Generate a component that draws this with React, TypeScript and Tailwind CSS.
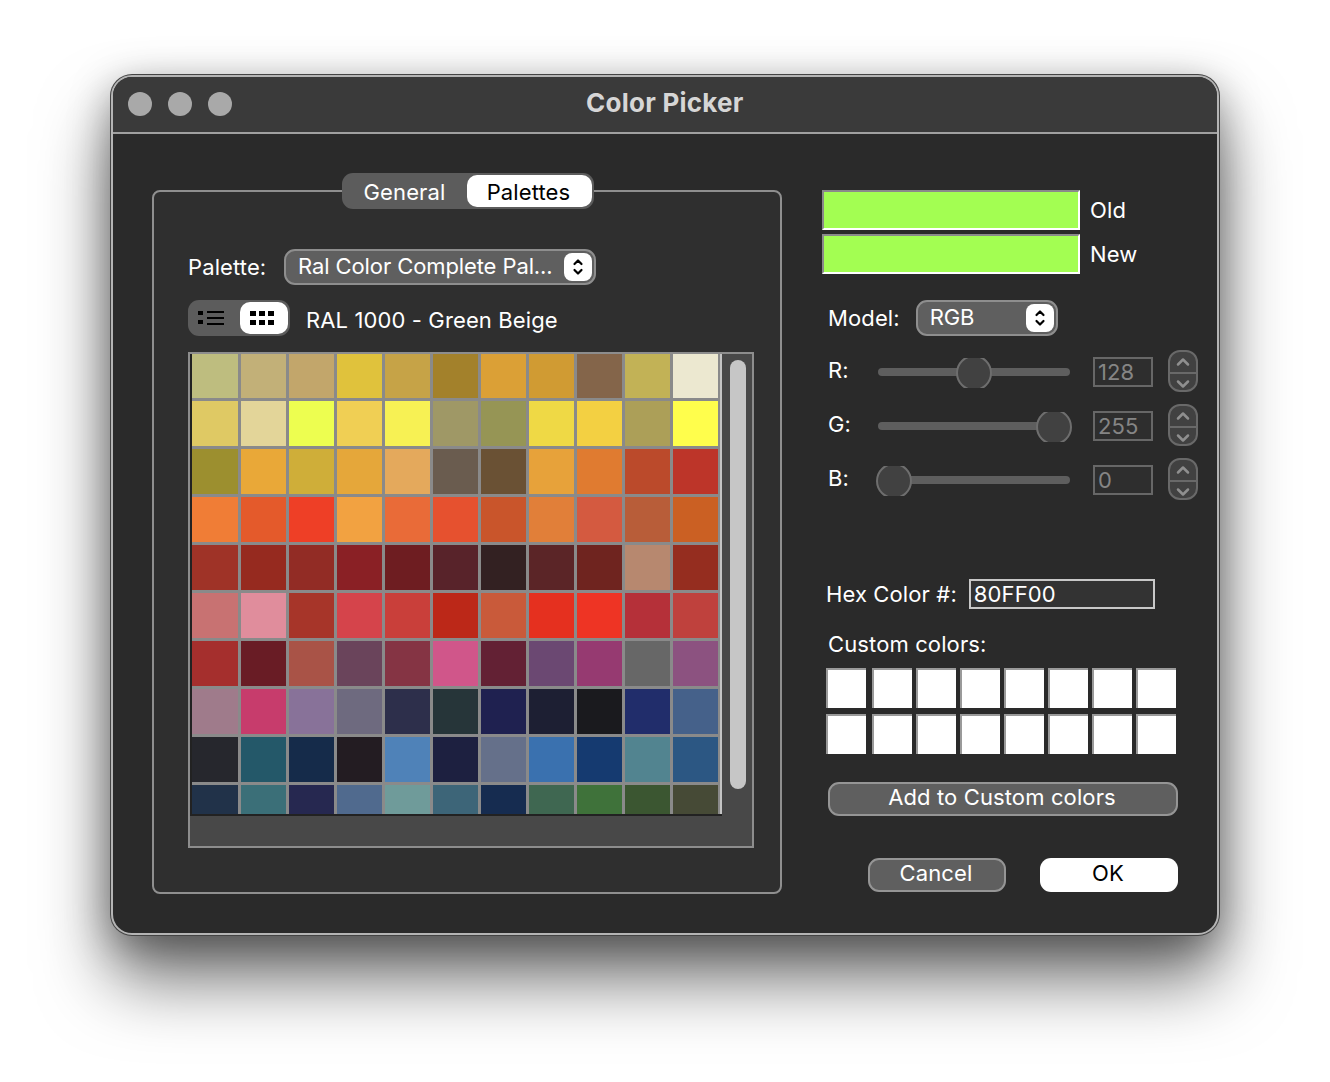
import { ChevronDown, ChevronUp } from "lucide-react";

const swatches = [
  ["#bebd7f", "#c2b078", "#c2a66b", "#e0c23c", "#c6a347", "#a3812b", "#dba036", "#d09b33", "#84654a", "#c2b256", "#ece8d0"],
  ["#dfc964", "#e3d599", "#edfe50", "#f0cf54", "#f7f154", "#9f9866", "#969555", "#efd945", "#f3d042", "#ac9f58", "#fffe4c"],
  ["#9c8f2f", "#e9a838", "#cfae39", "#e5a73a", "#e4a95c", "#6a5c4f", "#6a5134", "#e7a23a", "#e07b30", "#bb4a2b", "#bd3529"],
  ["#f07d36", "#e45a2b", "#ee3f26", "#f2a241", "#e96b38", "#e6512f", "#c9552b", "#e17f39", "#d45a40", "#b85d39", "#cb6023"],
  ["#9f3327", "#962a1f", "#922c25", "#8a2025", "#6e1d21", "#58232a", "#332122", "#5b2527", "#6f241f", "#b7886f", "#952d1f"],
  ["#c87272", "#e08d9c", "#a73529", "#d5444b", "#c93f3a", "#bc2818", "#c95a3a", "#e5301f", "#ee3424", "#b53039", "#bf413d"],
  ["#a52f2d", "#691c25", "#a95347", "#6a445b", "#853444", "#d0568a", "#632134", "#6b4872", "#963a71", "#676767", "#8c5280"],
  ["#9f7b8b", "#c73c6c", "#887299", "#6e6a7f", "#2d2f4b", "#263539", "#1f2150", "#1d1f33", "#1a1a1e", "#212d6b", "#45618a"],
  ["#26272d", "#245869", "#152b4a", "#231c22", "#4f82b8", "#1d2040", "#65708a", "#3a71af", "#153a70", "#528490", "#2c5783"],
  ["#213249", "#3b6f78", "#262850", "#506a8e", "#6f9b9a", "#3d6578", "#162c50", "#3f6751", "#3f723a", "#3b5631", "#464a36"],
];

const channels = [
  { label: "R:", value: 128, thumb: 78 },
  { label: "G:", value: 255, thumb: 158 },
  { label: "B:", value: 0, thumb: -2 },
];

function UpDownIcon() {
  return (
    <svg width="12" height="18" viewBox="0 0 12 18" fill="none" stroke="#000" strokeWidth="2.2" strokeLinecap="round" strokeLinejoin="round">
      <path d="M2.5 6 6 2.5 9.5 6" />
      <path d="M2.5 12 6 15.5 9.5 12" />
    </svg>
  );
}

function SelectBox({ text, className }: { text: string; className: string }) {
  return (
    <div className={`flex h-9 items-center justify-between rounded-[11px] border-2 border-[#8e8e8e] bg-[#5f5f5f] pr-[2px] pl-3 ${className}`}>
      <span className="pb-[2px] tracking-[-0.1px] whitespace-nowrap text-white">{text}</span>
      <span className="flex h-7 w-7 items-center justify-center rounded-lg bg-white">
        <UpDownIcon />
      </span>
    </div>
  );
}

function ColorWell() {
  return <div className="h-10 w-[258px] border-2 border-t-[#8a8a8a] border-r-white border-b-white border-l-[#8a8a8a] bg-[#a3fe52]" />;
}

function CustomRow() {
  return (
    <div className="flex gap-1">
      {[0, 1, 2, 3, 4, 5, 6, 7].map((i) => (
        <div
          key={i}
          className={`h-10 w-10 border-t-2 border-l-2 border-t-[#9a9a9a] border-l-[#9a9a9a] bg-white ${i === 1 ? "ml-[2px]" : ""}`}
        />
      ))}
    </div>
  );
}

function ChannelRow({ label, value, thumb }: { label: string; value: number; thumb: number }) {
  return (
    <div className="flex h-[54px] items-center">
      <span className="mb-[6px] w-[56px] pl-[6px] text-white">{label}</span>
      <div className="relative h-[30px] w-[192px]">
        <div className="absolute top-[10px] right-0 left-0 h-2 rounded-full bg-[#5e5e5e]" />
        <div className="absolute top-0 h-[30px] w-9 overflow-hidden" style={{ left: thumb }}>
          <div className="mt-[-3px] h-9 w-9 rounded-full border-2 border-[#6e6e6e] bg-[#414141]" />
        </div>
      </div>
      <div className="mb-[2px] ml-[23px] flex h-[30px] w-[60px] items-center border-2 border-[#676767] bg-[#2e2e2e] pl-[3px] text-[#858585]">
        {value}
      </div>
      <div className="mb-1 ml-[15px] flex h-[42px] w-[30px] flex-col rounded-xl border-2 border-[#696969] bg-[#414141] text-[#8f8f8f]">
        <div className="flex flex-1 items-center justify-center border-b-2 border-[#696969]">
          <ChevronUp size={20} strokeWidth={3} />
        </div>
        <div className="flex flex-1 items-center justify-center">
          <ChevronDown size={20} strokeWidth={3} />
        </div>
      </div>
    </div>
  );
}

export default function App() {
  return (
    <div className="min-h-[1082px] bg-white pt-[75px] pl-[111px] font-['Inter',sans-serif] text-[22px] leading-none tracking-[0.12px]">
      <div className="h-[860px] w-[1108px] overflow-hidden rounded-[21px] border-2 border-[#b4b4b4] bg-[#2a2a2a] shadow-[0_0_0_1px_#444,0_45px_70px_rgba(0,0,0,0.55),0_10px_40px_rgba(0,0,0,0.35)]">
        <div className="flex h-[57px] items-center border-b-2 border-[#a0a0a0] bg-[#3a3a3a] pb-[2px] pl-[15px]">
          <div className="flex gap-4">
            <span className="h-6 w-6 rounded-full bg-[#a9a9a9]" />
            <span className="h-6 w-6 rounded-full bg-[#a9a9a9]" />
            <span className="h-6 w-6 rounded-full bg-[#a9a9a9]" />
          </div>
          <span className="mb-[2px] ml-[354px] text-[26px] font-bold tracking-[0.25px] text-[#d6d6d6]">Color Picker</span>
        </div>

        <div className="flex pt-[56px] pl-[39px]">
          <div className="relative h-[704px] w-[630px] rounded-lg border-2 border-[#8f8f8f] bg-[#2f2f2f] px-[34px] pt-[57px]">
            <div className="absolute top-[-19px] left-[188px] flex h-9 w-[252px] items-center rounded-[11px] bg-[#5c5c5c] p-[2px] pl-0">
              <span className="w-[125px] pt-[2px] text-center text-white">General</span>
              <span className="flex h-[32px] w-[125px] items-center justify-center rounded-[10px] bg-white pt-[2px] pr-[2px] text-black">Palettes</span>
            </div>

            <div className="flex items-center">
              <span className="w-[96px] text-white">Palette:</span>
              <SelectBox text="Ral Color Complete Pal..." className="w-[312px]" />
            </div>

            <div className="mt-[15px] flex items-center gap-4">
              <div className="flex h-9 w-[102px] items-center justify-between rounded-[11px] bg-[#5c5c5c] p-[2px] pl-[10px]">
                <svg width="26" height="16" viewBox="0 0 26 16" fill="#000">
                  <rect x="0" y="1" width="5" height="4" />
                  <rect x="0" y="10" width="5" height="4" />
                  <rect x="9" y="1" width="17" height="2" />
                  <rect x="9" y="7" width="17" height="2" />
                  <rect x="9" y="13" width="17" height="2" />
                </svg>
                <span className="flex h-8 w-12 items-center justify-center rounded-[10px] bg-white pr-1">
                  <svg width="24" height="15" viewBox="0 0 24 15" fill="#000">
                    <rect x="0" y="0" width="6" height="5" />
                    <rect x="9" y="0" width="6" height="5" />
                    <rect x="18" y="0" width="6" height="5" />
                    <rect x="0" y="9" width="6" height="5" />
                    <rect x="9" y="9" width="6" height="5" />
                    <rect x="18" y="9" width="6" height="5" />
                  </svg>
                </span>
              </div>
              <span className="mt-[4px] text-white">RAL 1000 - Green Beige</span>
            </div>

            <div className="mt-4 flex h-[496px] w-[566px] border-2 border-[#8d8d8d] bg-[#484848]">
              <div className="h-[462px] w-[532px] border-b-2 border-l-2 border-[#222] pr-[2px]">
                <div className="h-[460px] w-[530px] overflow-hidden border-r-2 border-[#c4c4c4] bg-[#8a8a8a]">
                  <div className="grid grid-cols-[46px_repeat(10,45px)] grid-rows-[44px_repeat(9,45px)] gap-[3px] blur-[0.5px]">
                    {swatches.flat().map((color, i) => (
                      <div key={i} style={{ backgroundColor: color }} />
                    ))}
                  </div>
                </div>
              </div>
              <div className="mt-[6px] ml-2 h-[429px] w-4 rounded-full bg-[#c6c6c6]" />
            </div>
          </div>

          <div className="ml-10 w-[380px]">
            <div className="flex items-center gap-[10px]">
              <ColorWell />
              <span className="text-white">Old</span>
            </div>
            <div className="mt-1 flex items-center gap-[10px]">
              <ColorWell />
              <span className="text-white">New</span>
            </div>

            <div className="mt-[26px] flex items-center gap-4 pl-[6px]">
              <span className="text-white">Model:</span>
              <SelectBox text="RGB" className="w-[142px]" />
            </div>

            <div className="mt-[10px]">
              {channels.map((c) => (
                <ChannelRow key={c.label} {...c} />
              ))}
            </div>

            <div className="mt-[71px] flex items-center gap-3 pl-1">
              <span className="text-white">Hex Color #:</span>
              <div className="flex h-[30px] w-[186px] items-center border-2 border-[#c8c8c8] bg-[#333] pl-[3px] text-white">80FF00</div>
            </div>

            <div className="mt-6 pl-[6px] text-white">Custom colors:</div>
            <div className="mt-[13px] flex flex-col gap-[6px] pl-1">
              <CustomRow />
              <CustomRow />
            </div>

            <button type="button" className="mt-7 ml-[6px] block h-[34px] w-[350px] rounded-[11px] border-2 border-[#959595] bg-[#5f5f5f] pr-[2px] pb-1 text-white">
              Add to Custom colors
            </button>
            <div className="mt-[42px] ml-[46px] flex gap-[34px]">
              <button type="button" className="h-[34px] w-[138px] rounded-[11px] border-2 border-[#959595] bg-[#5f5f5f] pr-[2px] pb-1 text-white">
                Cancel
              </button>
              <button type="button" className="h-[34px] w-[138px] rounded-[11px] bg-white pr-[2px] pb-1 text-black">
                OK
              </button>
            </div>
          </div>
        </div>
      </div>
    </div>
  );
}
